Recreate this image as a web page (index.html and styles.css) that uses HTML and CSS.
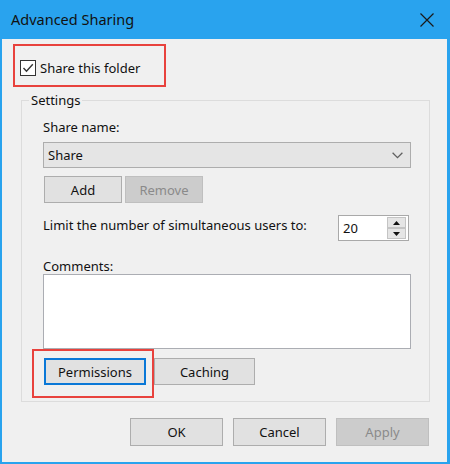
FILE: index.html
```html
<!DOCTYPE html>
<html>
<head>
<meta charset="utf-8">
<link rel="stylesheet" href="styles.css">
</head>
<body>
<div class="window">
  <div class="titlebar">
    <span class="title">Advanced Sharing</span>
    <svg class="close" width="14" height="14" viewBox="0 0 14 14"><path d="M0.5 0.5 L13.5 13.5 M13.5 0.5 L0.5 13.5" stroke="#1a1a1a" stroke-width="1.2" fill="none"/></svg>
  </div>
  <div class="content">
    <div class="share-box">
      <span class="checkbox"><svg width="14" height="14" viewBox="0 0 14 14"><path d="M2.5 7 L5.5 10.2 L11.8 3.2" stroke="#333" stroke-width="1.4" fill="none"/></svg></span>
      <span class="share-text">Share this folder</span>
    </div>
    <fieldset class="settings">
      <legend>Settings</legend>
      <div class="label label-share">Share name:</div>
      <div class="combo">
        <span>Share</span>
        <svg class="chev" width="11" height="7" viewBox="0 0 11 7"><path d="M0.6 0.8 L5.5 5.6 L10.4 0.8" stroke="#606060" stroke-width="1.3" fill="none"/></svg>
      </div>
      <div class="btn-row">
        <div class="btn btn-small">Add</div>
        <div class="btn btn-small disabled">Remove</div>
      </div>
      <div class="limit-row">
        <span class="limit-text">Limit the number of simultaneous users to:</span>
        <div class="spin">
          <span class="spin-value">20</span>
          <div class="spin-btns">
            <div class="spin-btn"><svg width="7" height="4" viewBox="0 0 7 4"><path d="M0 4 L3.5 0 L7 4 Z" fill="#111"/></svg></div>
            <div class="spin-btn"><svg width="7" height="4" viewBox="0 0 7 4"><path d="M0 0 L3.5 4 L7 0 Z" fill="#111"/></svg></div>
          </div>
        </div>
      </div>
      <div class="label label-comments">Comments:</div>
      <div class="textarea"></div>
      <div class="btn-row btn-row-bottom">
        <div class="perm-wrap">
          <div class="btn btn-wide focused">Permissions</div>
          <div class="annot"></div>
        </div>
        <div class="btn btn-wide">Caching</div>
      </div>
    </fieldset>
    <div class="footer">
      <div class="btn btn-footer">OK</div>
      <div class="btn btn-footer">Cancel</div>
      <div class="btn btn-footer disabled">Apply</div>
    </div>
  </div>
</div>
</body>
</html>
```

FILE: styles.css
```css
* { box-sizing: border-box; }
html, body { margin: 0; padding: 0; }
body {
  width: 450px;
  height: 464px;
  font-family: "Noto Sans", "Open Sans", sans-serif;
  font-size: 13px;
  color: #111;
  background: #f0f0f0;
}
.window {
  width: 450px;
  height: 464px;
  border-left: 2px solid #29a3ee;
  border-right: 3px solid #29a3ee;
  border-bottom: 2px solid #29a3ee;
  background: #f0f0f0;
  display: flex;
  flex-direction: column;
}
.titlebar {
  height: 39px;
  background: #29a3ee;
  display: flex;
  align-items: center;
  justify-content: space-between;
  padding: 0 13px 0 9px;
  margin-left: -2px;
  margin-right: -3px;
  padding-left: 11px;
  padding-right: 16px;
}
.title {
  font-size: 14.5px;
  color: #111;
  margin-top: -1px;
}
.close { display: block; }
.content {
  padding: 5px 18px 0 11px;
  display: flex;
  flex-direction: column;
}
.share-box {
  width: 153px;
  height: 43px;
  border: 2px solid #e8423d;
  display: flex;
  align-items: center;
  padding: 12px 0 7px 5px;
}
.checkbox {
  width: 16px;
  height: 16px;
  border: 1px solid #333;
  background: #fff;
  display: flex;
  align-items: center;
  justify-content: center;
  flex: none;
}
.checkbox svg { display: block; }
.share-text {
  margin-left: 4px;
  line-height: 20px;
}
.settings {
  margin: 4px 0 0 8px;
  width: 409px;
  border: 1px solid #dcdcdc;
  padding: 11px 18px 16px 21px;
}
.settings legend {
  padding: 0 2px;
  margin-left: -14px;
  line-height: 18px;
}
.label {
  line-height: 15px;
}
.label-share { margin-top: 0; }
.combo {
  margin-top: 7px;
  height: 26px;
  width: 368px;
  border: 1px solid #adadad;
  background: #e5e5e5;
  display: flex;
  align-items: center;
  justify-content: space-between;
  padding: 0 7px 0 4px;
}
.chev { display: block; margin-top: 1px; }
.btn-row {
  display: flex;
  gap: 3px;
  margin-top: 8px;
  padding-left: 1px;
}
.btn {
  border: 1px solid #adadad;
  background: #e1e1e1;
  display: flex;
  align-items: center;
  justify-content: center;
  color: #111;
}
.btn.disabled {
  background: #cccccc;
  border-color: #bfbfbf;
  color: #8a8a8a;
}
.btn-small { width: 78px; height: 27px; }
.limit-row {
  margin-top: 12px;
  display: flex;
  justify-content: space-between;
  align-items: flex-start;
  width: 368px;
  padding-right: 2px;
}
.limit-text {
  line-height: 15px;
  margin-top: 3px;
}
.spin {
  width: 71px;
  height: 26px;
  border: 1px solid #a9a9a9;
  background: #fff;
  display: flex;
  align-items: stretch;
}
.spin-value {
  flex: 1;
  padding-left: 4px;
  line-height: 24px;
}
.spin-btns {
  width: 21px;
  display: flex;
  flex-direction: column;
  padding: 1px 2px 1px 0;
  gap: 0;
}
.spin-btn {
  flex: 1;
  background: #e5e5e5;
  border: 1px solid #c4c4c4;
  display: flex;
  align-items: center;
  justify-content: center;
}
.spin-btn svg { display: block; }
.label-comments { margin-top: 18px; }
.textarea {
  width: 368px;
  height: 75px;
  background: #fff;
  border: 1px solid #abadb3;
}
.btn-row-bottom {
  margin-top: 9px;
  gap: 8px;
}
.btn-wide { width: 101px; height: 27px; }
.perm-wrap { position: relative; }
.focused {
  width: 102px;
  border: 2px solid #0a78d7;
}
.annot {
  position: absolute;
  top: -9px;
  left: -12px;
  right: -8px;
  bottom: -13px;
  border: 2px solid #e8423d;
}
.footer {
  margin-top: 16px;
  display: flex;
  justify-content: flex-end;
  gap: 10px;
  padding-right: 0;
}
.btn-footer { width: 93px; height: 28px; }
```
